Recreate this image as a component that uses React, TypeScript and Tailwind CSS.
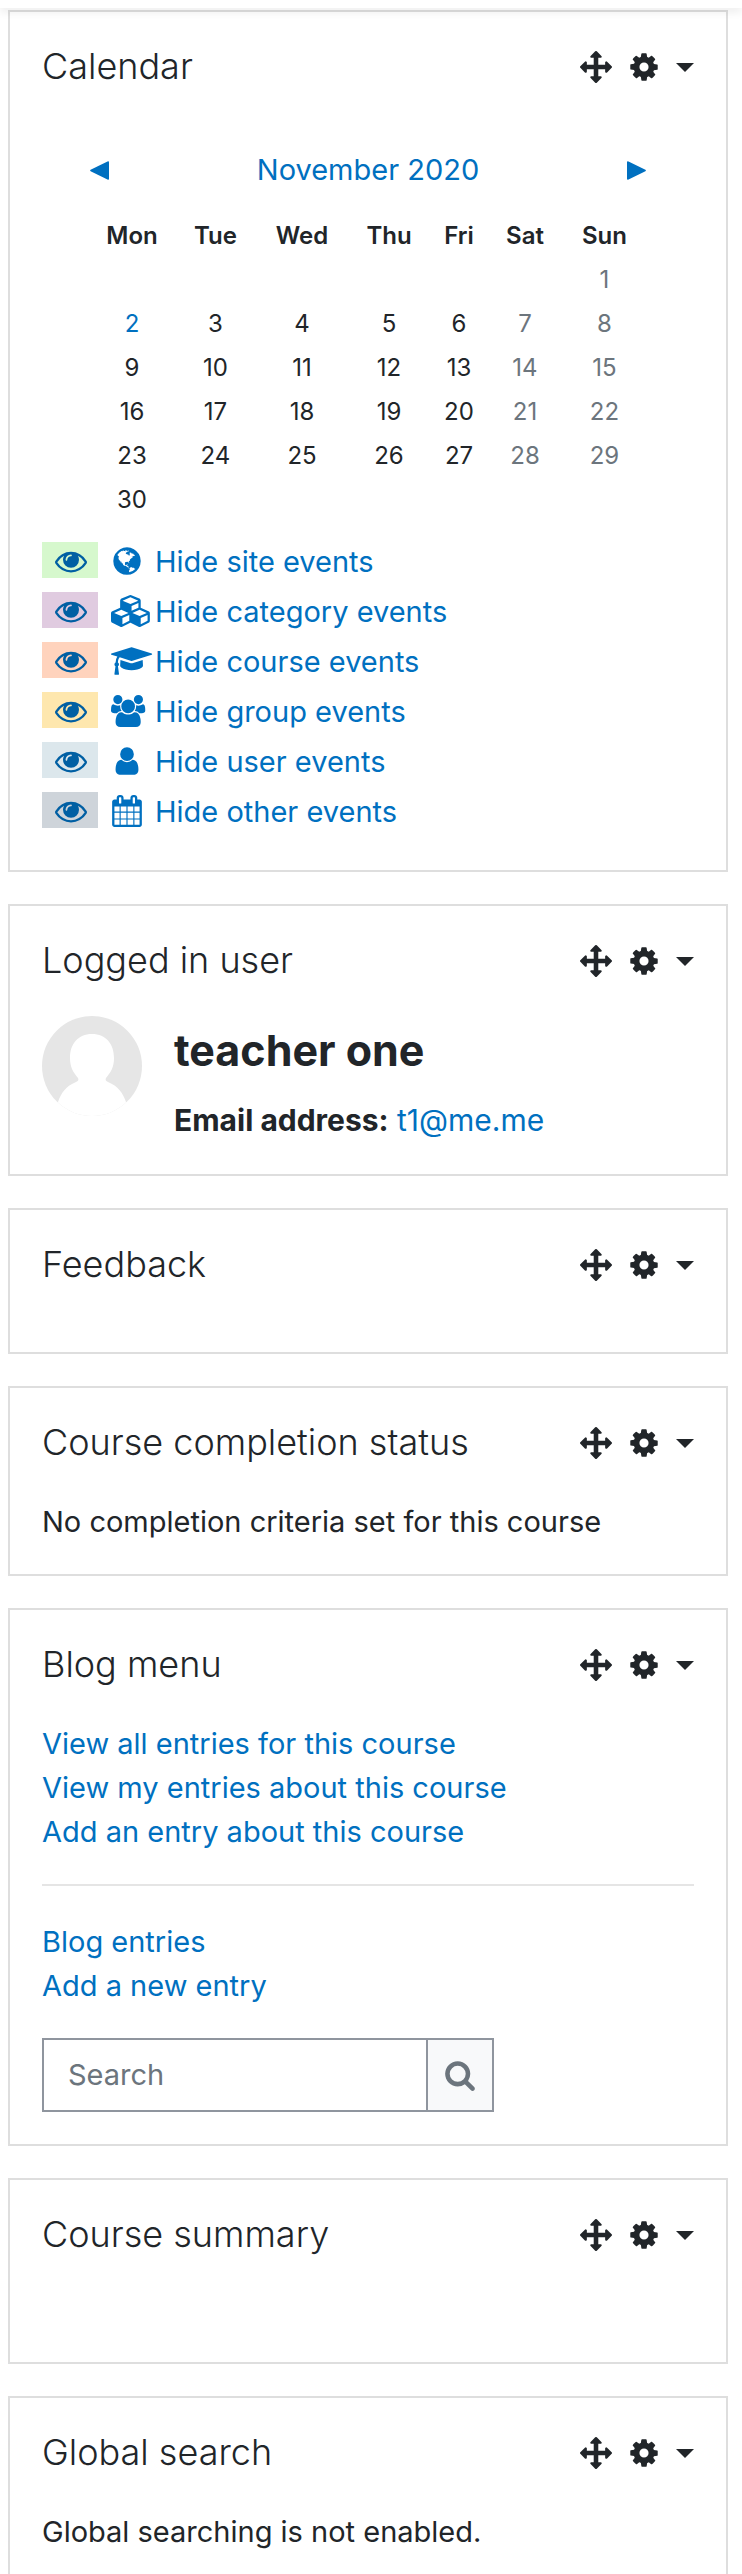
import type { ReactNode } from "react";

function Icon({ d, width = 1792, className = "" }: { d: string; width?: number; className?: string }) {
  return (
    <svg aria-hidden="true" viewBox={`0 0 ${width} 1792`} fill="currentColor" className={`h-8 w-auto shrink-0 overflow-visible ${className}`}>
      <path d={d} />
    </svg>
  );
}

const ARROWS =
  "M1792 896q0 26-19 45l-256 256q-19 19-45 19t-45-19-19-45v-128h-384v384h128q26 0 45 19t19 45-19 45l-256 256q-19 19-45 19t-45-19l-256-256q-19-19-19-45t19-45 45-19h128v-384h-384v128q0 26-19 45t-45 19-45-19l-256-256q-19-19-19-45t19-45l256-256q19-19 45-19t45 19 19 45v128h384v-384h-128q-26 0-45-19t-19-45 19-45l256-256q19-19 45-19t45 19l256 256q19 19 19 45t-19 45-45 19h-128v384h384v-128q0-26 19-45t45-19 45 19l256 256q19 19 19 45z";
const COG =
  "M1152 896q0-106-75-181t-181-75-181 75-75 181 75 181 181 75 181-75 75-181zm512-109v222q0 12-8 23t-20 13l-185 28q-19 54-39 91 35 50 107 138 10 12 10 25t-9 23q-27 37-99 108t-94 71q-12 0-26-9l-138-108q-44 23-91 38-16 136-29 186-7 28-36 28h-222q-14 0-24.5-8.5t-11.5-21.5l-28-184q-49-16-90-37l-141 107q-10 9-25 9-14 0-25-11-126-114-165-168-7-10-7-23 0-12 8-23 15-21 51-66.5t54-70.5q-27-50-41-99l-183-27q-13-2-21-12.5t-8-23.5v-222q0-12 8-23t19-13l186-28q14-46 39-92-40-57-107-138-10-12-10-24 0-10 9-23 26-36 98.5-107.5t94.5-71.5q13 0 26 10l138 107q44-23 91-38 16-136 29-186 7-28 36-28h222q14 0 24.5 8.5t11.5 21.5l28 184q49 16 90 37l142-107q9-9 24-9 13 0 25 10 129 119 165 170 7 8 7 22 0 12-8 23-15 21-51 66.5t-54 70.5q26 50 41 98l183 28q13 2 21 12.5t8 23.5z";
const EYE =
  "M1664 960q-152-236-381-353 61 104 61 225 0 185-131.5 316.5t-316.5 131.5-316.5-131.5-131.5-316.5q0-121 61-225-229 117-381 353 133 205 333.5 326.5t434.5 121.5 434.5-121.5 333.5-326.5zm-720-384q0-20-14-34t-34-14q-125 0-214.5 89.5t-89.5 214.5q0 20 14 34t34 14 34-14 14-34q0-86 61-147t147-61q20 0 34-14t14-34zm848 384q0 34-20 69-140 230-376.5 368.5t-499.5 138.5-499.5-139-376.5-368q-20-35-20-69t20-69q140-229 376.5-368t499.5-139 499.5 139 376.5 368q20 35 20 69z";
const GLOBE =
  "M896 128q209 0 385.5 103t279.5 279.5 103 385.5-103 385.5-279.5 279.5-385.5 103-385.5-103-279.5-279.5-103-385.5 103-385.5 279.5-279.5 385.5-103zm274 521q-2 1-9.5 9.5t-13.5 9.5q2 0 4.5-5t5-11 3.5-7q6-7 22-15 14-6 52-12 34-8 51 11-2-2 9.5-13t14.5-12q3-2 15-4.5t15-7.5l2-22q-12 1-17.5-7t-6.5-21q0 2-6 8 0-7-4.5-8t-11.5 1-9 1q-10-3-15-7.5t-8-16.5-4-15q-2-5-9.5-11t-9.5-10q-1-2-2.5-5.5t-3-6.5-4-5.5-5.5-2.5-7 5-7.5 10-4.5 5q-3-2-6-1.5t-4.5 1-4.5 3-5 3.5q-3 2-8.5 3t-8.5 2q15-5-1-11-10-4-16-3 9-4 7.5-12t-8.5-14h5q-1-4-8.5-8.5t-17.5-8.5-13-6q-8-5-34-9.5t-33-.5q-5 6-4.5 10.5t4 14 3.5 12.5q1 6-5.5 13t-6.5 12q0 7 14 15.5t10 21.5q-3 8-16 16t-16 12q-5 8-1.5 18.5t10.5 16.5q2 2 1.5 4t-3.5 4.5-5.5 4-6.5 3.5l-3 2q-11 5-20.5-6t-13.5-26q-7-25-16-30-23-8-29 1-5-13-41-26-25-9-58-4 6-1 0-15-7-15-19-12 3-6 4-17.5t1-13.5q3-13 12-23 1-1 7-8.5t9.5-13.5.5-6q35 4 50-11 5-5 11.5-17t10.5-17q9-6 14-5.5t14.5 5.5 14.5 5q14 1 15.5-11t-7.5-20q12 1 3-17-4-7-8-9-12-4-27 5-8 4 2 8-1-1-9.5 10.5t-16.5 17.5-16-5q-1-1-5.5-13.5t-9.5-13.5q-8 0-16 15 3-8-11-15t-24-8q19-12-8-27-7-4-20.5-5t-19.5 4q-5 7-5.5 11.5t5 8 10.5 5.5 11.5 4 8.500 3q14 10 8 14-2 1-8.500 3.500t-11.500 4.500-6 4q-3 4 0 14t-2 14q-5-5-9-17.500t-7-16.500q7 9-25 6l-10-1q-4 0-16 2t-20.500 1-13.500-8q-4-8 0-20 1-4 4-2-4-3-11-9.500t-10-8.500q-46 15-94 41 6 1 12-1 5-2 13-6.500t10-5.500q34-14 42-7l5-5q14 16 20 25-7-4-30-1-20 6-22 12 7 12 5 18-4-3-11.500-10t-14.500-11-15-5q-16 0-22 1-146 80-235 222 7 7 12 8 4 1 5 9t2.500 11 11.500-3q9 8 3 19 1-1 44 27 19 17 21 21 3 11-10 18-1-2-9-9t-9-4q-3 5 .5 18.500t10.500 12.500q-7 0-9.500 16t-2.500 35.500-1 23.500l2 1q-3 12 5.500 34.500t21.500 19.500q-13 3 20 43 6 8 8 9 3 2 12 7.500t15 10 10 10.500q4 5 10 22.500t14 23.500q-2 6 9.500 20t10.500 23q-1 0-2.500 1t-2.500 1q3 7 15.500 14t15.500 13q1 3 2 10t3 11 8 2q2-20-24-62-15-25-17-29-3-5-5.500-15.500t-4.500-14.500q2 0 6 1.500t8.500 3.500 7.500 4 2 3q-3 7 2 17.500t12 18.500 17 19 12 13q6 6 14 19.500t0 13.500q9 0 20 10.500t17 19.500q5 8 8 26t5 24q2 7 8.500 13.500t12.500 9.500l16 8 13 7q5 2 18.500 10.500t21.500 11.500q10 4 16 4t14.500-2.500 13.500-3.500q15-2 29 15t21 21q36 19 55 11-2 1 .5 7.500t8 15.500 9 14.500 5.500 8.500q5 6 18 15t18 15q6-4 7-9-3 8 7 20t18 10q14-3 14-32-31 15-49-18 0-1-2.500-5.500t-4-8.500-2.500-8.500 0-7.500 5-3q9 0 10-3.500t-2-12.500-4-13q-1-8-11-20t-12-15q-5 9-16 8t-16-9q0 1-1.500 5.500t-1.500 6.500q-13 0-15-1 1-3 2.500-17.500t3.500-22.500q1-4 5.500-12t7.500-14.500 4-12.500-4.500-9.500-17.500-2.500q-19 1-26 20-1 3-3 10.500t-5 11.500-9 7q-7 3-24 2t-24-5q-13-8-22.500-29t-9.500-37q0-10 2.500-26.500t3-25-5.500-24.500q3-2 9-9.500t10-10.500q2-1 4.500-1.500t4.500 0 4-1.500 3-6q-1-1-4-3-3-3-4-3 7 3 28.500-1.500t27.500 1.500q15 11 22-2 0-1-2.500-9.500t-.5-13.500q5 27 29 9 3 3 15.500 5t17.500 5q3 2 7 5.500t5.500 4.500 5-.5 8.500-6.500q10 14 12 24 11 40 19 44 7 3 11 2t4.500-9.500 0-14-1.500-12.500l-1-8v-18l-1-8q-15-3-18.500-12t1.500-18.500 15-18.500q1-1 8-3.500t15.500-6.500 12.500-8q21-19 15-35 7 0 11-9-1 0-5-3t-7.500-5-4.500-2q9-5 2-16 5-3 7.500-11t7.500-10q9 12 21 2 8-8 1-16 5-7 20.500-10.500t18.500-9.500q7 2 8-2t1-12 3-12q4-5 15-9t13-5l17-11q3-4 0-4 18 2 31-11 10-11-6-20 3-6-3-9.500t-15-5.500q3-1 11.500-.5t10.500-1.500q15-10-7-16-17-5-43 12zm-163 877q206-36 351-189-3-3-12.500-4.500t-12.500-3.500q-18-7-24-8 1-7-2.500-13t-8-9-12.500-8-11-7q-2-2-7-6t-7-5.500-7.500-4.500-8.500-2-10 1l-3 1q-3 1-5.500 2.500t-5.500 3-4 3 0 2.500q-21-17-36-22-5-1-11-5.500t-10.500-7-10-1.500-11.500 7q-5 5-6 15t-2 13q-7-5 0-17.500t2-18.500q-3-6-10.500-4.500t-12 4.500-11.500 8.500-9 6.500-8.500 5.500-8.500 7.500q-3 4-6 12t-5 11q-2-4-11.500-6.500t-9.500-5.500q2 10 4 35t5 38q7 31-12 48-27 25-29 40-4 22 12 26 0 7-8 20.500t-7 21.500q0 6 2 16z";
const CUBES =
  "M640 1632l384-192v-314l-384 164v342zm-64-454l404-173-404-173-404 173zm1088 454l384-192v-314l-384 164v342zm-64-454l404-173-404-173-404 173zm-448-293l384-165v-266l-384 164v267zm-64-379l441-189-441-189-441 189zm1088 518v416q0 36-19 67t-52 47l-448 224q-25 14-57 14t-57-14l-448-224q-4-2-7-4-2 2-7 4l-448 224q-25 14-57 14t-57-14l-448-224q-33-16-52-47t-19-67v-416q0-38 21.5-70t56.5-48l434-186v-400q0-38 21.5-70t56.5-48l448-192q23-10 50-10t50 10l448 192q35 16 56.5 48t21.5 70v400l434 186q36 16 57 48t21 70z";
const GRADUATION =
  "M1774 836l18 316q4 69-82 128t-235 93.5-323 34.5-323-34.5-235-93.5-82-128l18-316 574 181q22 7 48 7t48-7zm530-324q0 23-22 31l-1120 352q-4 1-10 1t-10-1l-652-206q-43 34-71 111.5t-34 178.5q63 36 63 109 0 69-58 107l58 433q2 14-8 25-9 11-24 11h-192q-15 0-24-11-10-11-8-25l58-433q-58-38-58-107 0-73 65-111 11-207 98-330l-333-104q-22-8-22-31t22-31l1120-352q4-1 10-1t10 1l1120 352q22 8 22 31z";
const GROUP =
  "M593 896q-162 5-265 128h-134q-82 0-138-40.5t-56-118.5q0-353 124-353 6 0 43.5 21t97.5 42.5 119 21.5q67 0 133-23-5 37-5 66 0 139 81 256zm1071 637q0 120-73 189.5t-194 69.5h-874q-121 0-194-69.5t-73-189.5q0-53 3.5-103.5t14-109 26.5-108.5 43-97.5 62-81 85.5-53.5 111.5-20q10 0 43 21.5t73 48 107 48 135 21.5 135-21.5 107-48 73-48 43-21.5q61 0 111.5 20t85.5 53.5 62 81 43 97.5 26.5 108.5 14 109 3.5 103.5zm-1024-1277q0 106-75 181t-181 75-181-75-75-181 75-181 181-75 181 75 75 181zm704 384q0 159-112.5 271.5t-271.5 112.5-271.5-112.5-112.5-271.5 112.5-271.5 271.5-112.5 271.5 112.5 112.5 271.5zm576 225q0 78-56 118.5t-138 40.5h-134q-103-123-265-128 81-117 81-256 0-29-5-66 66 23 133 23 59 0 119-21.5t97.5-42.5 43.5-21q124 0 124 353zm-128-609q0 106-75 181t-181 75-181-75-75-181 75-181 181-75 181 75 75 181z";
const USER =
  "M1536 1399q0 109-62.5 187t-150.5 78h-854q-88 0-150.5-78t-62.5-187q0-85 8.5-160.5t31.5-152 58.5-131 94-89 134.5-34.5q131 128 313 128t313-128q76 0 134.5 34.5t94 89 58.5 131 31.5 152 8.5 160.5zm-256-887q0 159-112.5 271.5t-271.5 112.5-271.5-112.5-112.5-271.5 112.5-271.5 271.5-112.5 271.5 112.5 112.5 271.5z";
const CALENDAR =
  "M192 1664h288v-288h-288v288zm352 0h320v-288h-320v288zm-352-352h288v-320h-288v320zm352 0h320v-320h-320v320zm-352-384h288v-288h-288v288zm736 736h320v-288h-320v288zm-384-736h320v-288h-320v288zm768 736h288v-288h-288v288zm-384-352h320v-320h-320v320zm-352-864v-288q0-13-9.5-22.5t-22.5-9.5h-64q-13 0-22.5 9.5t-9.5 22.5v288q0 13 9.5 22.5t22.5 9.5h64q13 0 22.5-9.5t9.5-22.5zm736 864h288v-320h-288v320zm-384-384h320v-288h-320v288zm384 0h288v-288h-288v288zm32-480v-288q0-13-9.5-22.5t-22.5-9.5h-64q-13 0-22.5 9.5t-9.5 22.5v288q0 13 9.5 22.5t22.5 9.5h64q13 0 22.5-9.5t9.5-22.5zm384-64v1280q0 52-38 90t-90 38h-1408q-52 0-90-38t-38-90v-1280q0-52 38-90t90-38h128v-96q0-66 47-113t113-47h64q66 0 113 47t47 113v96h384v-96q0-66 47-113t113-47h64q66 0 113 47t47 113v96h128q52 0 90 38t38 90z";
const SEARCH =
  "M1216 832q0-185-131.5-316.5t-316.5-131.5-316.5 131.5-131.5 316.5 131.5 316.5 316.5 131.5 316.5-131.5 131.5-316.5zm512 832q0 52-38 90t-90 38q-54 0-90-38l-343-342q-179 124-399 124-143 0-273.5-55.5t-225-150-150-225-55.5-273.5 55.5-273.5 150-225 225-150 273.5-55.5 273.5 55.5 225 150 150 225 55.5 273.5q0 220-124 399l343 343q37 37 37 90z";

function Block({ title, children }: { title: string; children?: ReactNode }) {
  return (
    <section className="border-2 border-[#dedede] bg-white p-8">
      <header className="mb-8 flex h-[46px] items-center justify-between">
        <h2 className="pb-[2px] text-[36px] leading-[44px] font-light">{title}</h2>
        <div className="flex items-center gap-4">
          <button type="button" aria-label={`Move ${title} block`}>
            <Icon d={ARROWS} />
          </button>
          <button type="button" aria-label={`Actions for ${title} block`} className="flex items-center gap-4">
            <Icon d={COG} />
            <svg aria-hidden="true" viewBox="0 0 18 9" fill="currentColor" className="h-[9px] w-[18px]">
              <path d="M0 0h18L9 9z" />
            </svg>
          </button>
        </div>
      </header>
      {children}
    </section>
  );
}

/* Running text hangs slightly low in its block without changing the block's height. */
function Copy({ children }: { children: ReactNode }) {
  return <div className="-mb-[2px] pt-[2px]">{children}</div>;
}

const DAYS = ["Mon", "Tue", "Wed", "Thu", "Fri", "Sat", "Sun"];
const WEEKS = [
  [0, 0, 0, 0, 0, 0, 1],
  [2, 3, 4, 5, 6, 7, 8],
  [9, 10, 11, 12, 13, 14, 15],
  [16, 17, 18, 19, 20, 21, 22],
  [23, 24, 25, 26, 27, 28, 29],
  [30, 0, 0, 0, 0, 0, 0],
];

const EVENTS = [
  { label: "Hide site events", icon: GLOBE, width: 1792, swatch: "bg-[#d6f8cd]" },
  { label: "Hide category events", icon: CUBES, width: 2304, swatch: "bg-[#e0cbe0]" },
  { label: "Hide course events", icon: GRADUATION, width: 2304, swatch: "bg-[#ffd3bd]" },
  { label: "Hide group events", icon: GROUP, width: 1920, swatch: "bg-[#fee7ae]" },
  { label: "Hide user events", icon: USER, width: 1792, swatch: "bg-[#dce7ec]" },
  { label: "Hide other events", icon: CALENDAR, width: 1792, swatch: "bg-[#ced4da]" },
];

function Calendar() {
  return (
    <>
      <div className="px-12 pt-[26px]">
        <nav aria-label="Month" className="mb-[22px] flex h-11 items-center justify-between text-[#0070c0]">
          <a href="#previous" aria-label="Previous month">
            <svg aria-hidden="true" viewBox="0 0 19 19" fill="currentColor" className="size-[19px]">
              <path d="M.6 8.800 17.500.4q1.500-.6 1.500.9v16.400q0 1.500-1.500.9L.6 10.200q-1-.7 0-1.400z" />
            </svg>
          </a>
          <a href="#month">November 2020</a>
          <a href="#next" aria-label="Next month">
            <svg aria-hidden="true" viewBox="0 0 19 19" fill="currentColor" className="size-[19px]">
              <path d="M18.400 8.800 1.500.4Q0-.2 0 1.300v16.400q0 1.500 1.500.9l16.900-8.400q1-.7 0-1.400z" />
            </svg>
          </a>
        </nav>
        <table className="w-full table-fixed text-center text-[24px] leading-[44px]">
          <colgroup>
            <col className="w-[84px]" />
            <col className="w-[83px]" />
            <col className="w-[90px]" />
            <col className="w-[84px]" />
            <col className="w-[56px]" />
            <col className="w-[76px]" />
            <col className="w-[83px]" />
          </colgroup>
          <thead>
            <tr>
              {DAYS.map((day) => (
                <th key={day} scope="col" className="p-0 font-semibold">
                  {day}
                </th>
              ))}
            </tr>
          </thead>
          <tbody>
            {WEEKS.map((week, row) => (
              <tr key={row} className="h-11">
                {week.map((day, column) => (
                  <td key={column} className={column > 4 ? "p-0 text-[#6c757d]" : "p-0"}>
                    {day === 2 ? (
                      <a href="#today" className="text-[#0070c0]">
                        2
                      </a>
                    ) : (
                      day || null
                    )}
                  </td>
                ))}
              </tr>
            ))}
          </tbody>
        </table>
      </div>
      <ul className="mt-5 mb-[10px] flex flex-col gap-[14px]">
        {EVENTS.map((event) => (
          <li key={event.label}>
            <a href="#filter" className="flex h-9 items-center text-[#0070c0]">
              <span className={`mr-[13px] flex h-9 w-14 items-center justify-center pt-[2px] pl-[2px] text-[#005fa3] ${event.swatch}`}>
                <Icon d={EYE} />
              </span>
              <span className="w-11 shrink-0 pt-[2px]">
                <Icon d={event.icon} width={event.width} />
              </span>
              <span className="pt-[3px]">{event.label}</span>
            </a>
          </li>
        ))}
      </ul>
    </>
  );
}

function Avatar() {
  return (
    <svg role="img" aria-label="Picture of teacher one" viewBox="0 0 100 100" className="size-[100px] shrink-0">
      <clipPath id="avatar-clip">
        <circle cx="50" cy="50" r="50" />
      </clipPath>
      <g clipPath="url(#avatar-clip)">
        <rect width="100" height="100" fill="#e6e6e6" />
        <path
          fill="#fff"
          d="M50 18c14 0 22 10 22 24 0 9-3 14-8 20-1 2 0 3 2 4 10 4 15 11 18 20v14H16V86c3-9 8-16 18-20 2-1 3-2 2-4-5-6-8-11-8-20 0-14 8-24 22-24z"
        />
      </g>
    </svg>
  );
}

export default function App() {
  return (
    <div className="bg-white font-['Inter',sans-serif] text-[29px] leading-[44px] text-[#212529]">
      <div className="relative h-2 bg-white shadow-[0_4px_8px_rgba(0,0,0,0.08)]" />
      <main className="flex flex-col gap-8 pt-[2px] pr-[14px] pb-8 pl-2">
        <Block title="Calendar">
          <Calendar />
        </Block>
        <Block title="Logged in user">
          <div className="flex gap-8">
            <Avatar />
            <div className="pt-2">
              <h3 className="mb-[22px] text-[43px] leading-[52px] font-bold">teacher one</h3>
              <p className="text-[30px]">
                <strong className="font-bold">Email address:</strong>{" "}
                <a href="mailto:t1@me.me" className="text-[#0070c0]">
                  t1@me.me
                </a>
              </p>
            </div>
          </div>
        </Block>
        <Block title="Feedback" />
        <Block title="Course completion status">
          <Copy>
            <p>No completion criteria set for this course</p>
          </Copy>
        </Block>
        <Block title="Blog menu">
          <Copy>
            <ul className="text-[#0070c0]">
              <li>
                <a href="#all">View all entries for this course</a>
              </li>
              <li>
                <a href="#mine">View my entries about this course</a>
              </li>
              <li>
                <a href="#add">Add an entry about this course</a>
              </li>
            </ul>
          </Copy>
          <hr className="my-8 border-t-2 border-[#e5e5e5]" />
          <Copy>
            <ul className="text-[#0070c0]">
              <li>
                <a href="#entries">Blog entries</a>
              </li>
              <li>
                <a href="#new">Add a new entry</a>
              </li>
            </ul>
          </Copy>
          <form className="mt-8 flex h-[74px] max-w-[452px] border-2 border-[#8f959e]">
            <input
              type="text"
              aria-label="Search"
              placeholder="Search"
              className="w-0 grow px-6 outline-none placeholder:text-[#6c757d]"
            />
            <button
              type="submit"
              aria-label="Search blog"
              className="flex w-[66px] items-center justify-center border-l-2 border-[#8f959e] bg-[#f8f9fa] text-[#6c757d]"
            >
              <Icon d={SEARCH} />
            </button>
          </form>
        </Block>
        <Block title="Course summary">
          <div className="h-10" />
        </Block>
        <Block title="Global search">
          <Copy>
            <p>Global searching is not enabled.</p>
          </Copy>
        </Block>
      </main>
    </div>
  );
}
